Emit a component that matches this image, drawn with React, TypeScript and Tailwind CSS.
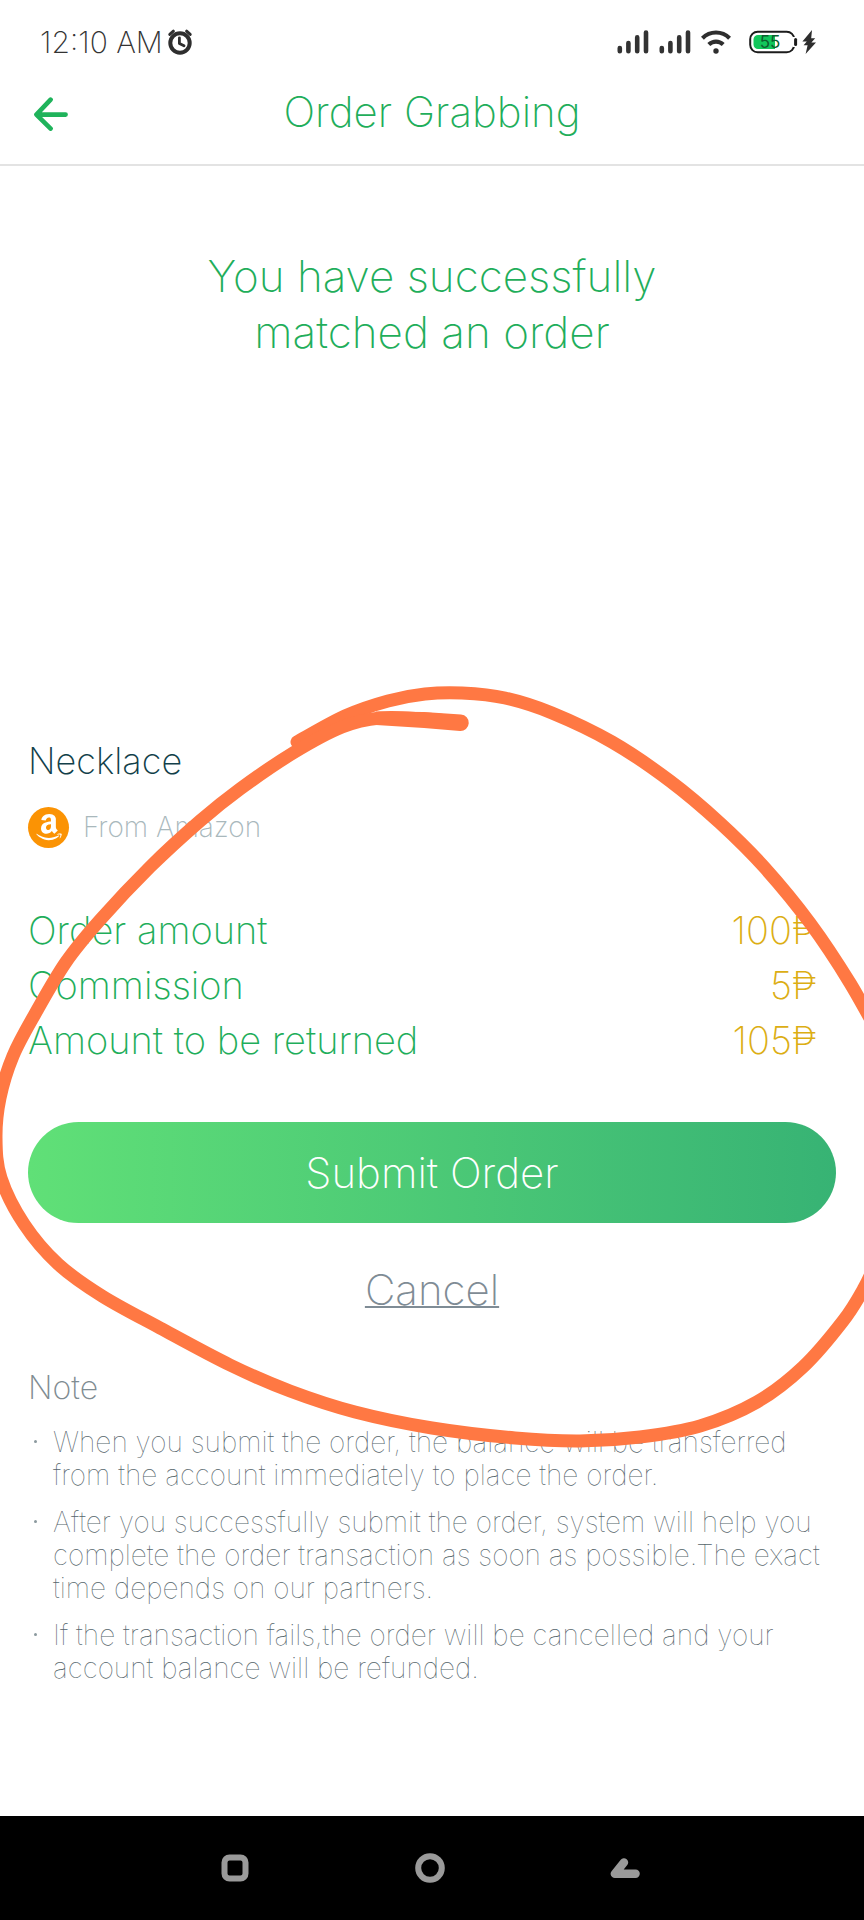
import React from 'react';
import { FaAmazon } from 'react-icons/fa';

type Point = [number, number];

const amounts = [
  { label: 'Order amount', value: '100₱' },
  { label: 'Commission', value: '5₱' },
  { label: 'Amount to be returned', value: '105₱' },
];

const notes = [
  'When you submit the order, the balance will be transferred from the account immediately to place the order.',
  'After you successfully submit the order, system will help you complete the order transaction as soon as possible.The exact time depends on our partners.',
  'If the transaction fails,the order will be cancelled and your account balance will be refunded.',
];

const topStroke: Point[] = [
  [297, 742], [345, 716], [388, 701], [425, 694], [462, 693], [505, 698], [552, 713], [612, 742],
  [670, 781], [720, 823], [765, 868], [810, 923], [850, 983], [884, 1044],
];

const loopStroke: Point[] = [
  [458, 722], [424, 719], [380, 718], [342, 727], [293, 753], [240, 789], [200, 821], [150, 867], [100, 920],
  [66, 962], [35, 1014], [13, 1056], [0, 1098], [-4, 1138], [1, 1178], [24, 1224], [58, 1264], [102, 1296],
  [160, 1328], [230, 1365], [290, 1391], [355, 1412], [432, 1428], [515, 1438], [580, 1441], [640, 1437],
  [700, 1426], [757, 1402], [803, 1367], [843, 1321], [864, 1288], [878, 1258],
];

// Catmull-Rom spline through every point, written as cubic beziers
function smoothPath(points: Point[]) {
  let d = `M${points[0][0]} ${points[0][1]}`;
  for (let i = 0; i < points.length - 1; i++) {
    const p0 = points[i - 1] ?? points[i];
    const p1 = points[i];
    const p2 = points[i + 1];
    const p3 = points[i + 2] ?? p2;
    d += `C${p1[0] + (p2[0] - p0[0]) / 6} ${p1[1] + (p2[1] - p0[1]) / 6} ${p2[0] - (p3[0] - p1[0]) / 6} ${p2[1] - (p3[1] - p1[1]) / 6} ${p2[0]} ${p2[1]}`;
  }
  return d;
}

function AlarmIcon() {
  return (
    <svg width="26" height="26" viewBox="0 0 26 26" fill="none" stroke="#2e2e2e" aria-hidden="true">
      <circle cx="13" cy="14" r="9.7" strokeWidth="4" />
      <path d="M2.8 5.4 6.4 2.2M23.2 5.4 19.6 2.2" strokeWidth="3" strokeLinecap="round" />
      <path d="M12.4 8.8v5.6l4.6 2.4" strokeWidth="2.8" strokeLinecap="round" strokeLinejoin="round" />
    </svg>
  );
}

function SignalIcon() {
  return (
    <svg width="32" height="24" viewBox="0 0 32 24" stroke="#333" strokeWidth="4.6" strokeLinecap="round" aria-hidden="true">
      <path d="M2.8 18v3.2M11.4 13v8.2M20.2 7.4v13.8M29 2.6v18.6" />
    </svg>
  );
}

function WifiIcon() {
  return (
    <svg width="30" height="24" viewBox="0 0 30 24" fill="none" stroke="#2e2e2e" strokeWidth="4.2" aria-hidden="true">
      <path d="M1.4 8.2C9 .6 21 .6 28.6 8.2" />
      <path d="M7.8 14.6c4.2-4 10.2-4 14.4 0" />
      <circle cx="15" cy="21" r="2.7" fill="#2e2e2e" stroke="none" />
    </svg>
  );
}

function BatteryIcon() {
  return (
    <svg width="49" height="24" viewBox="0 0 49 24" fill="none" aria-label="55% charged">
      <rect x="1.2" y="1.7" width="44" height="20.6" rx="7.5" stroke="#1c1c1c" strokeWidth="2" />
      <path d="M45.2 7v10" stroke="#fff" strokeWidth="3.2" />
      <path d="M46.6 9.6v4.8" stroke="#1c1c1c" strokeWidth="3" strokeLinecap="round" />
      <path d="M9 5h17v14H9a4.5 4.5 0 0 1-4.5-4.5v-5A4.5 4.5 0 0 1 9 5Z" fill="#12c65b" />
      <text x="21" y="18" textAnchor="middle" fontSize="17" fontWeight="400" fill="#0c5e2e" fontFamily="Inter, sans-serif">
        55
      </text>
    </svg>
  );
}

function BoltIcon() {
  return (
    <svg width="14" height="24" viewBox="0 0 14 24" fill="#2e2e2e" aria-hidden="true">
      <path d="M10 0 .4 11.4h4.4L1.6 15.2h4L3.6 24 14 12.6H9.4l3.8-4.4H9.2Z" />
    </svg>
  );
}

function StatusBar() {
  return (
    <div className="flex items-center justify-between pt-6 pr-12 pl-10 text-[#333]">
      <div className="flex h-9 items-center gap-1 text-[30px] font-extralight">
        <span>12:10 AM</span>
        <AlarmIcon />
      </div>
      <div className="flex h-9 items-center gap-[10px]">
        <SignalIcon />
        <SignalIcon />
        <WifiIcon />
        <div className="ml-2 flex items-center gap-1">
          <BatteryIcon />
          <BoltIcon />
        </div>
      </div>
    </div>
  );
}

function NavBar() {
  return (
    <nav className="flex h-[104px] items-center justify-center gap-[165px] bg-black pr-1">
      <button type="button" aria-label="Recent apps">
        <svg width="30" height="30" viewBox="0 0 30 30" fill="none" stroke="#9a9a9a" strokeWidth="6">
          <rect x="4.5" y="4.5" width="21" height="21" rx="5" />
        </svg>
      </button>
      <button type="button" aria-label="Home">
        <svg width="30" height="30" viewBox="0 0 30 30" fill="none" stroke="#9a9a9a" strokeWidth="6">
          <circle cx="15" cy="15" r="11.8" />
        </svg>
      </button>
      <button type="button" aria-label="Back">
        <svg width="30" height="30" viewBox="0 0 30 30" fill="none" stroke="#9a9a9a" strokeWidth="8.4" strokeLinecap="round" strokeLinejoin="round">
          <path d="M14 9.4 4.8 20.8H25.6" />
        </svg>
      </button>
    </nav>
  );
}

export default function App() {
  return (
    <div className="relative flex min-h-screen flex-col overflow-hidden bg-white font-['Inter','Liberation_Sans',sans-serif] font-extralight">
      <StatusBar />

      <header className="grid h-[106px] grid-cols-[1fr_auto_1fr] items-center border-b-2 border-[#e3e3e3] px-8 text-[#1fae5b]">
        <button type="button" aria-label="Back" className="justify-self-start">
          <svg width="38" height="38" viewBox="0 0 38 38" fill="none" stroke="#1fb35b" strokeWidth="4.6" strokeLinecap="round" strokeLinejoin="round">
            <path d="M18.6 6.6 4.4 21.6l14.2 14M5 21.6h28.6" />
          </svg>
        </button>
        <h1 className="text-[42px] leading-[56px]">Order Grabbing</h1>
      </header>

      <main className="grow px-7">
        <h2 className="mx-auto mt-[82px] max-w-[480px] text-center text-[44px] leading-[56px] text-[#1fae5b]">
          You have successfully matched an order
        </h2>

        <h3 className="mt-[377px] text-[36px] leading-[48px] text-[#123f4a]">Necklace</h3>
        <div className="mt-[21px] flex h-[42px] items-center gap-[14px]">
          <span className="flex size-[41px] items-center justify-center rounded-full bg-[#fb9304] text-white">
            <FaAmazon size={30} />
          </span>
          <span className="text-[28px] text-[#a9b8bc]">From Amazon</span>
        </div>

        <dl className="mt-[55px] pr-5 text-[38px] leading-[55px]">
          {amounts.map(row => (
            <div key={row.label} className="flex justify-between">
              <dt className="text-[#1fae5b]">{row.label}</dt>
              <dd className="text-[#dcae14]">{row.value}</dd>
            </div>
          ))}
        </dl>

        <button type="button" className="mt-[54px] h-[101px] w-full rounded-full bg-linear-to-r from-[#60e077] to-[#37b374] text-[42px] text-white">
          Submit Order
        </button>
        <div className="mt-[39px] text-center">
          <button type="button" className="text-[42px] leading-[56px] text-[#7f8c95] underline decoration-2">
            Cancel
          </button>
        </div>

        <h4 className="mt-[50px] text-[32px] leading-[40px] text-[#7f8c92]">Note</h4>
        <ul className="mt-[18px] space-y-[14px] pr-3 text-[28px] leading-[33px] font-thin text-[#55656b]">
          {notes.map(note => (
            <li key={note} className="flex gap-4">
              <span className="mt-[14px] ml-[6px] size-[3px] shrink-0 rounded-full bg-[#8b999e]" />
              <span>{note}</span>
            </li>
          ))}
        </ul>
      </main>

      <NavBar />

      {/* marker drawn by hand round the order */}
      <svg
        className="pointer-events-none absolute inset-0 h-full w-full"
        viewBox="0 0 864 1920"
        preserveAspectRatio="none"
        fill="none"
        stroke="#ff7843"
        strokeLinecap="round"
        strokeLinejoin="round"
        aria-hidden="true"
      >
        <path d={smoothPath(topStroke)} strokeWidth="13" />
        <path d={smoothPath(loopStroke)} strokeWidth="13" />
        {/* the pen lands heavier here, so the line thins out from the tip */}
        <path d="M376 711.500 424 712 461 714.500A8 8 0 0 1 460 731L424 728 376 725Z" fill="#ff7843" stroke="none" />
      </svg>
    </div>
  );
}
